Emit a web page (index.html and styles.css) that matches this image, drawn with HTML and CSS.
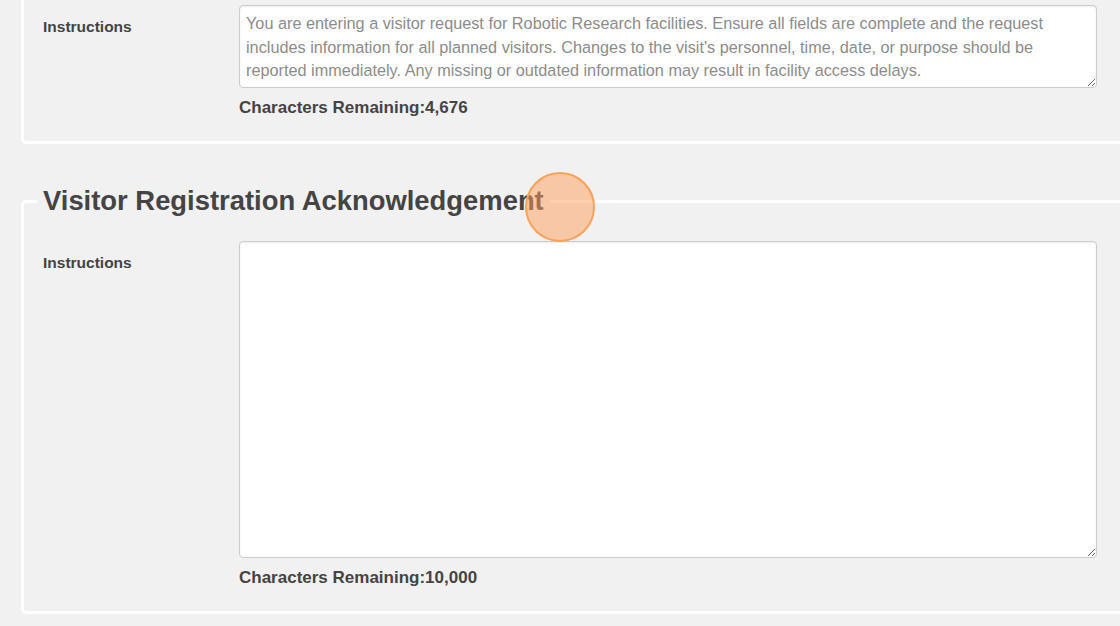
FILE: index.html
```html
<!DOCTYPE html>
<html lang="en">
<head>
<meta charset="utf-8">
<title>Visitor Request</title>
<link rel="stylesheet" href="styles.css">
</head>
<body>
<div class="page">
  <fieldset class="section section-first">
    <div class="row">
      <label class="label" for="ta1">Instructions</label>
      <div class="field">
        <textarea id="ta1" class="ta ta-short" readonly>You are entering a visitor request for Robotic Research facilities. Ensure all fields are complete and the request includes information for all planned visitors. Changes to the visit's personnel, time, date, or purpose should be reported immediately. Any missing or outdated information may result in facility access delays.</textarea>
        <div class="count">Characters Remaining:4,676</div>
      </div>
    </div>
  </fieldset>

  <fieldset class="section section-second">
    <legend class="legend">Visitor Registration Acknowledgement</legend>
    <div class="row">
      <label class="label" for="ta2">Instructions</label>
      <div class="field">
        <textarea id="ta2" class="ta ta-tall"></textarea>
        <div class="count">Characters Remaining:10,000</div>
      </div>
    </div>
  </fieldset>

  <div class="click-marker"></div>
</div>
</body>
</html>
```

FILE: styles.css
```css
html, body {
  margin: 0;
  padding: 0;
  background: #f1f1f1;
  overflow: hidden;
  height: 626px;
}

.page {
  position: relative;
  display: flow-root;
  font-family: "Liberation Sans", Arial, Helvetica, sans-serif;
  color: #444;
}

.section {
  border: 3px solid #ffffff;
  border-radius: 5px;
  margin: 0 -60px 0 21px;
  padding: 0 0 23px 13px;
  min-width: 0;
}

.section-first {
  margin-top: -18px;
  padding-top: 20px;
}

.section-second {
  margin-top: 41px;
  padding-top: 24px;
}

.legend {
  padding: 0 6px;
  font-size: 27.4px;
  line-height: 32px;
  font-weight: bold;
  color: #444;
}

.row {
  display: flex;
  padding-left: 6px;
}

.label {
  width: 196px;
  flex: none;
  padding-top: 11px;
  font-size: 15.5px;
  line-height: 21px;
  font-weight: bold;
  color: #444;
}

.field {
  display: flex;
  flex-direction: column;
  width: 858px;
}

.ta {
  box-sizing: border-box;
  width: 858px;
  margin: 0;
  padding: 6px 6px 4px;
  border: 1px solid #cccccc;
  border-radius: 4px;
  background: #ffffff;
  box-shadow: inset 0 1px 2px rgba(0, 0, 0, 0.08);
  font-family: "Liberation Sans", Arial, Helvetica, sans-serif;
  font-size: 16.25px;
  line-height: 23.5px;
  color: #8c8c8c;
  outline: none;
}

.ta-short {
  height: 83px;
}

.ta-tall {
  height: 317px;
}

.count {
  margin-top: 9px;
  font-size: 17px;
  line-height: 21px;
  font-weight: bold;
  color: #444;
}

.click-marker {
  position: absolute;
  left: 525px;
  top: 172px;
  width: 70px;
  height: 70px;
  box-sizing: border-box;
  border: 2px solid #f9a257;
  border-radius: 50%;
  background: rgba(255, 158, 92, 0.5);
}
```
